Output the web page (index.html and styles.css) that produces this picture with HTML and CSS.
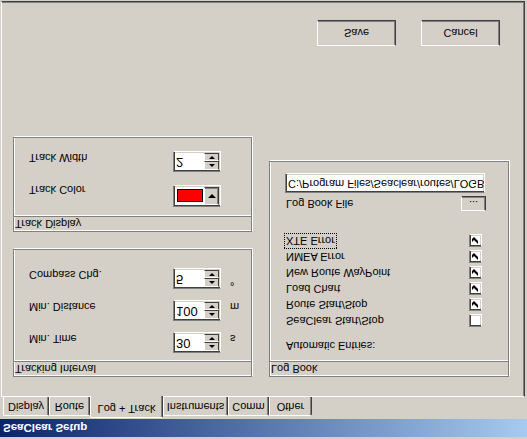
FILE: index.html
```html
<!DOCTYPE html>
<html>
<head>
<meta charset="utf-8">
<title>SeaClear Setup</title>
<link rel="stylesheet" href="styles.css">
</head>
<body>
<div class="screen">
  <div class="titlebar">SeaClear Setup</div>
  <div class="tabs">
    <div class="tab t-display">Display</div>
    <div class="tab t-route">Route</div>
    <div class="tab tab-active t-log">Log + Track</div>
    <div class="tab t-instr">Instruments</div>
    <div class="tab t-comm">Comm</div>
    <div class="tab t-other">Other</div>
  </div>
  <div class="panel">
    <div class="layout">
      <div class="col-left">
        <div class="group g-interval">
          <div class="group-head">Tracking Interval</div>
          <div class="rows r-interval">
            <div class="lbl">Min. Time</div>
            <div class="spin"><span class="val">30</span><span class="spin-btns"><span class="sbtn"><i class="up"></i></span><span class="sbtn"><i class="down"></i></span></span></div>
            <div class="unit">s</div>
            <div class="lbl">Min. Distance</div>
            <div class="spin"><span class="val">100</span><span class="spin-btns"><span class="sbtn"><i class="up"></i></span><span class="sbtn"><i class="down"></i></span></span></div>
            <div class="unit">m</div>
            <div class="lbl">Compass Chg.</div>
            <div class="spin"><span class="val">5</span><span class="spin-btns"><span class="sbtn"><i class="up"></i></span><span class="sbtn"><i class="down"></i></span></span></div>
            <div class="unit unit-deg">°</div>
          </div>
        </div>
        <div class="group g-display">
          <div class="group-head">Track Display</div>
          <div class="rows r-display">
            <div class="lbl lbl-color">Track Color</div>
            <div class="combo"><span class="swatch"></span><span class="combo-btn"><i class="down down-lg"></i></span></div>
            <div class="unit"></div>
            <div class="lbl">Track Width</div>
            <div class="spin"><span class="val">2</span><span class="spin-btns"><span class="sbtn"><i class="up"></i></span><span class="sbtn"><i class="down"></i></span></span></div>
            <div class="unit"></div>
          </div>
        </div>
      </div>
      <div class="group g-log">
        <div class="group-head">Log Book</div>
        <div class="log-body">
          <div class="auto">Automatic Entries:</div>
          <div class="checks">
            <div class="chk-row"><span class="chk-label">SeaClear Start/Stop</span><span class="chk"></span></div>
            <div class="chk-row"><span class="chk-label">Route Start/Stop</span><span class="chk"><svg class="mark" viewBox="0 0 7 7" width="7" height="7"><polygon points="0,2 2,4 6,0 6,3 2,7 0,5"/></svg></span></div>
            <div class="chk-row"><span class="chk-label">Load Chart</span><span class="chk"><svg class="mark" viewBox="0 0 7 7" width="7" height="7"><polygon points="0,2 2,4 6,0 6,3 2,7 0,5"/></svg></span></div>
            <div class="chk-row"><span class="chk-label">New Route WayPoint</span><span class="chk"><svg class="mark" viewBox="0 0 7 7" width="7" height="7"><polygon points="0,2 2,4 6,0 6,3 2,7 0,5"/></svg></span></div>
            <div class="chk-row"><span class="chk-label">NMEA Error</span><span class="chk"><svg class="mark" viewBox="0 0 7 7" width="7" height="7"><polygon points="0,2 2,4 6,0 6,3 2,7 0,5"/></svg></span></div>
            <div class="chk-row"><span class="chk-label"><span class="focus">XTE Error</span></span><span class="chk"><svg class="mark" viewBox="0 0 7 7" width="7" height="7"><polygon points="0,2 2,4 6,0 6,3 2,7 0,5"/></svg></span></div>
          </div>
          <div class="file-row">
            <span class="file-label">Log Book File</span>
            <span class="browse">...</span>
          </div>
          <div class="path">C:/Program Files/Seaclear/routes/LOGB</div>
        </div>
      </div>
      <div class="buttons">
        <div class="btn">Save</div>
        <div class="btn">Cancel</div>
      </div>
    </div>
  </div>
</div>
</body>
</html>
```
FILE: styles.css
```css
body {
  margin: 0;
  background: #d4d0c8;
}

.screen {
  width: 527px;
  height: 439px;
  overflow: hidden;
  transform: scaleY(-1);
  background: #d4d0c8;
  display: flex;
  flex-direction: column;
  font-family: "Liberation Sans", Arial, sans-serif;
  font-size: 11px;
  color: #000;
}

.titlebar {
  flex: none;
  margin-top: 2px;
  height: 18px;
  line-height: 18px;
  padding-left: 3px;
  background: linear-gradient(90deg, #0a246a 0%, #a6caf0 100%);
  color: #fff;
  font-weight: bold;
  font-size: 11.5px;
}

.tabs {
  flex: none;
  height: 22px;
  display: flex;
  align-items: flex-end;
  padding-left: 3px;
}

.tab {
  box-sizing: border-box;
  height: 19px;
  border: 1px solid #fff;
  border-bottom: 0;
  border-right-color: #404040;
  box-shadow: inset -1px 0 #808080;
  border-radius: 2px 2px 0 0;
  text-align: center;
  line-height: 17px;
  white-space: nowrap;
}

.tab-active {
  height: 22px;
  margin-bottom: -1px;
  position: relative;
  z-index: 1;
  background: #d4d0c8;
}

.t-display { width: 46px; }
.t-route { width: 41px; }
.t-log { width: 73px; }
.t-instr { width: 65px; }
.t-comm { width: 41px; }
.t-other { width: 43px; }

.panel {
  flex: none;
  box-sizing: border-box;
  margin-left: 1px;
  width: 524px;
  height: 396px;
  border: 1px solid #404040;
  border-top-color: #fff;
  border-left-color: #fff;
  box-shadow: inset -1px -1px #808080;
  padding: 19px 0 0 11px;
}

.layout {
  display: grid;
  grid-template-columns: 239px 240px;
  column-gap: 17px;
  align-items: start;
}

.col-left {
  display: flex;
  flex-direction: column;
  gap: 17px;
}

.group {
  box-sizing: border-box;
  border: 1px solid #808080;
  box-shadow: inset 1px 1px #fff, 1px 1px #fff;
}

.g-interval { height: 128px; }
.g-display { height: 95px; }
.g-log { height: 216px; }

.group-head {
  height: 14px;
  line-height: 14px;
  padding-left: 1px;
  border-bottom: 1px solid #808080;
  box-shadow: 0 1px #fff;
}

.rows {
  display: grid;
  grid-template-columns: 135px 48px auto;
  column-gap: 9px;
  padding-left: 15px;
}

.r-interval {
  padding-top: 8px;
  row-gap: 11px;
}

.r-display {
  padding-top: 9px;
  row-gap: 11px;
}

.lbl {
  padding-top: 8px;
  line-height: 13px;
  white-space: nowrap;
}

.lbl-color { padding-top: 11px; }

.unit {
  padding-top: 8px;
  line-height: 13px;
}

.unit-deg { padding-top: 1px; }

.spin,
.combo,
.path,
.chk {
  box-sizing: border-box;
  background: #fff;
  border: 1px solid;
  border-color: #808080 #fff #fff #808080;
  box-shadow: inset 1px 1px #404040, inset -1px -1px #d4d0c8;
}

.spin {
  width: 48px;
  height: 21px;
  display: flex;
}

.val {
  flex: 1;
  font-size: 13px;
  line-height: 17px;
  padding-left: 2px;
}

.spin-btns {
  display: flex;
  flex-direction: column;
  width: 15px;
  margin: 1px 1px 1px 0;
}

.sbtn,
.combo-btn {
  box-sizing: border-box;
  background: #d4d0c8;
  border: 1px solid;
  border-color: #fff #404040 #404040 #fff;
  display: flex;
  align-items: center;
  justify-content: center;
}

.sbtn { flex: 1; }

.up {
  width: 0;
  height: 0;
  border-left: 3px solid transparent;
  border-right: 3px solid transparent;
  border-bottom: 3px solid #000;
}

.down {
  width: 0;
  height: 0;
  border-left: 3px solid transparent;
  border-right: 3px solid transparent;
  border-top: 3px solid #000;
}

.down-lg {
  border-left-width: 4px;
  border-right-width: 4px;
  border-top-width: 4px;
}

.combo {
  width: 48px;
  height: 22px;
  display: flex;
  align-items: center;
}

.swatch {
  box-sizing: border-box;
  width: 26px;
  height: 13px;
  margin-left: 3px;
  background: #ff0000;
  border: 1px solid #000;
}

.combo-btn {
  align-self: stretch;
  width: 15px;
  margin: 1px 1px 1px auto;
  box-shadow: inset -1px -1px #808080;
}

.log-body {
  padding: 9px 22px 0 16px;
}

.auto { line-height: 13px; }

.checks { margin-top: 12px; }

.chk-row {
  display: flex;
  height: 16px;
}

.chk-label {
  flex: none;
  width: 183px;
  line-height: 12px;
  white-space: nowrap;
}

.focus {
  outline: 1px dotted #000;
  outline-offset: 1px;
}

.chk {
  width: 13px;
  height: 13px;
  display: flex;
  align-items: center;
  justify-content: center;
}

.mark { display: block; fill: #000; }

.file-row {
  display: flex;
  justify-content: space-between;
  margin-top: 20px;
}

.file-label {
  line-height: 13px;
  padding-top: 1px;
}

.browse {
  box-sizing: border-box;
  width: 25px;
  height: 15px;
  border: 1px solid;
  border-color: #fff #404040 #404040 #fff;
  box-shadow: inset -1px -1px #808080;
  text-align: center;
  line-height: 11px;
}

.path {
  width: 200px;
  height: 20px;
  margin-top: 3px;
  margin-left: -1px;
  line-height: 16px;
  padding-left: 2px;
  white-space: nowrap;
  overflow: hidden;
}

.buttons {
  grid-column: 1 / -1;
  display: flex;
  gap: 25px;
  margin-top: 91px;
  padding-left: 304px;
}

.btn {
  box-sizing: border-box;
  width: 79px;
  height: 26px;
  border: 1px solid;
  border-color: #fff #404040 #404040 #fff;
  box-shadow: inset -1px -1px #808080;
  text-align: center;
  line-height: 24px;
}
```
